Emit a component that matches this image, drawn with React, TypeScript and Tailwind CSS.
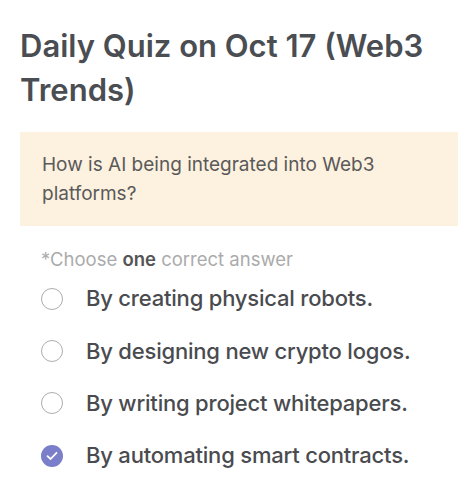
import React from "react";

const options = [
  "By creating physical robots.",
  "By designing new crypto logos.",
  "By writing project whitepapers.",
  "By automating smart contracts.",
];

export default function App() {
  return (
    <div
      className="w-[475px] h-[493px] bg-white overflow-hidden"
      style={{ fontFamily: "Inter, 'Noto Sans', sans-serif" }}
    >
      <div className="px-5 pt-6">
        <h1 className="text-[31px] leading-[44px] font-semibold text-[#4a4d52] tracking-[0px]">
          Daily Quiz on Oct 17 (Web3 Trends)
        </h1>
        <div className="mt-5 bg-[#fdf1df] pl-[22px] pr-4 pt-[18px] pb-[18px] w-[438px]">
          <p className="text-[19px] leading-[29px] text-[#5a5a5a]">
            How is AI being integrated into Web3 platforms?
          </p>
        </div>
        <div className="pl-[21px] mt-[21px]">
          <p className="text-[18.5px] leading-[24px] text-[#ababab]">
            *Choose <span className="font-semibold text-[#555]">one</span> correct answer
          </p>
          <div className="flex flex-col pt-[1.5px]">
            {options.map((o, i) => {
              const checked = i === 3;
              return (
                <div key={o} className="flex items-center h-[52.4px] gap-[23px]">
                  {checked ? (
                    <div className="w-[22px] h-[22px] rounded-full bg-[#7b7fc9] flex items-center justify-center shrink-0">
                      <svg width="12" height="10" viewBox="0 0 12 10" fill="none">
                        <path d="M1.5 5.2 L4.6 8 L10.5 1.8" stroke="white" strokeWidth="1.8" strokeLinecap="round" strokeLinejoin="round" />
                      </svg>
                    </div>
                  ) : (
                    <div className="w-[22px] h-[22px] rounded-full border-[1.5px] border-[#adadad] shrink-0" />
                  )}
                  <span className="text-[22px] font-medium text-[#4a4b4f] tracking-[-0.2px]">{o}</span>
                </div>
              );
            })}
          </div>
        </div>
      </div>
    </div>
  );
}
